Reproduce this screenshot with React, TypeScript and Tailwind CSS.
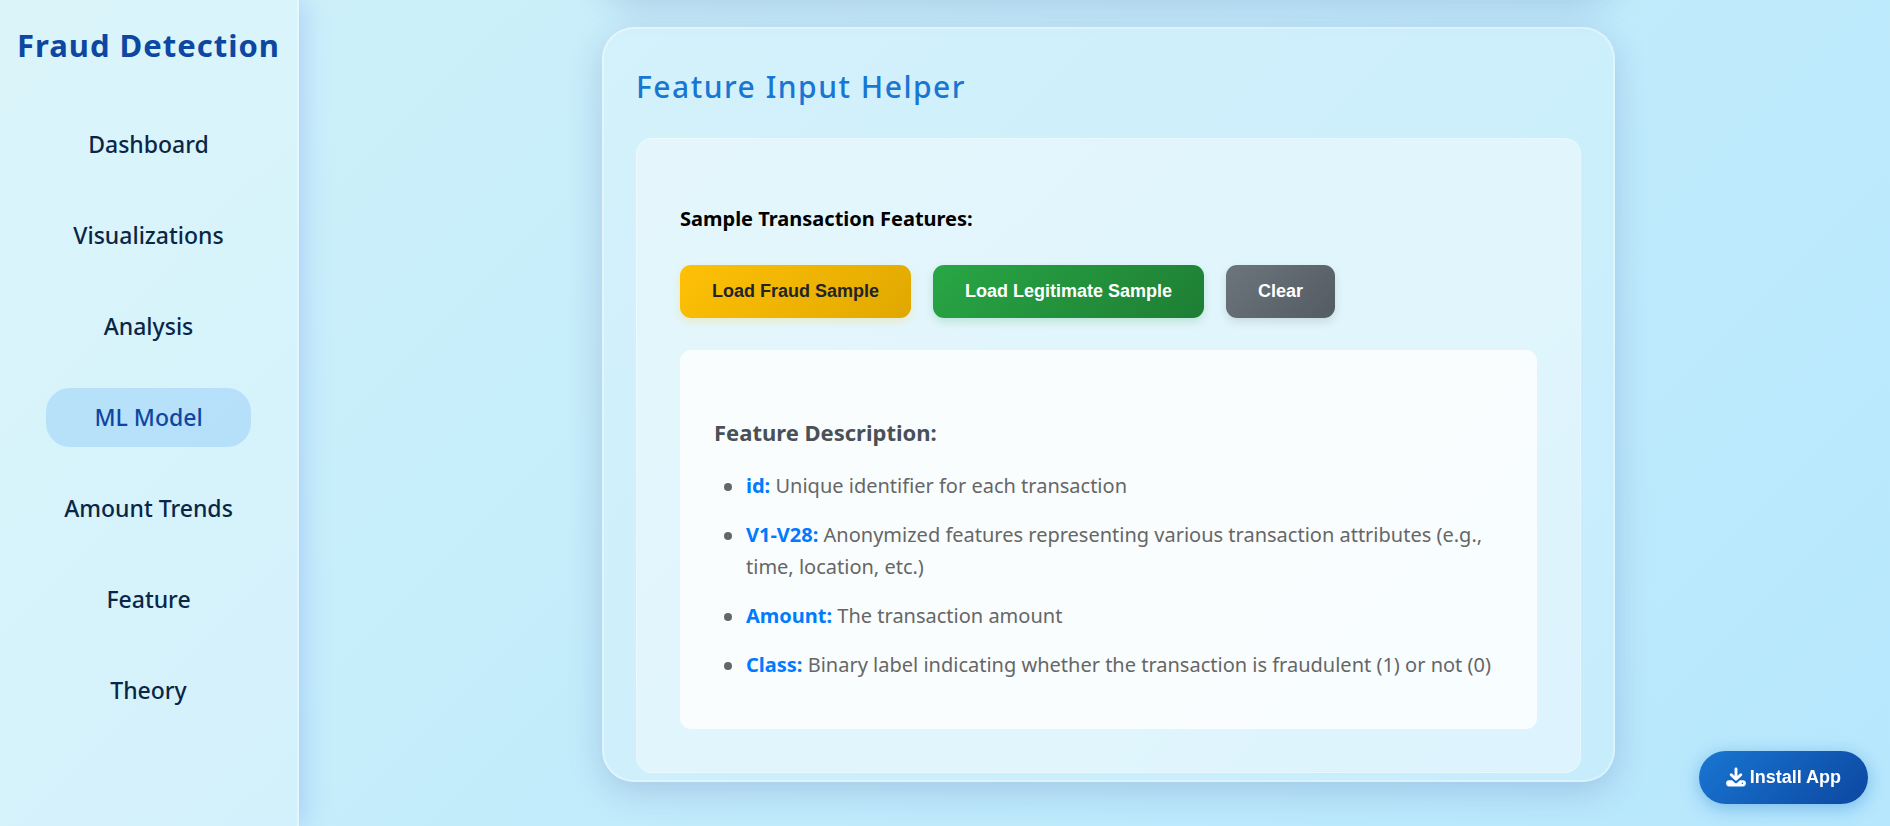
import React from "react";

const navItems = ["Dashboard", "Visualizations", "Analysis", "ML Model", "Amount Trends", "Feature", "Theory"];

const features = [
  { name: "id:", text: "Unique identifier for each transaction" },
  { name: "V1-V28:", text: "Anonymized features representing various transaction attributes (e.g., time, location, etc.)" },
  { name: "Amount:", text: "The transaction amount" },
  { name: "Class:", text: "Binary label indicating whether the transaction is fraudulent (1) or not (0)" },
];

const sampleButton =
  "h-[53px] cursor-pointer rounded-[11px] px-8 pb-0.5 font-['Liberation_Sans',sans-serif] text-lg font-bold";

function Sidebar() {
  const [active, setActive] = React.useState("ML Model");
  return (
    <aside className="z-10 flex w-[299px] shrink-0 flex-col items-center border-r-2 border-white/35 bg-white/25 shadow-[2px_0_26px_rgba(80,120,245,0.3)]">
      <h1 className="mt-[23px] text-[31px] leading-[44px] font-bold tracking-[1px] whitespace-nowrap text-[#0d47a1]">
        Fraud Detection
      </h1>
      <nav className="mt-12 w-full">
        <ul className="flex flex-col items-center gap-8">
          {navItems.map((item) => (
            <li key={item}>
              <a
                href="#"
                aria-current={item === active ? "page" : undefined}
                onClick={(e) => {
                  e.preventDefault();
                  setActive(item);
                }}
                className={
                  item === active
                    ? "block rounded-3xl bg-[#90caf9]/45 px-12 py-3 text-[23px] leading-[35px] font-medium text-[#0d47a1]"
                    : "block rounded-3xl px-12 py-3 text-[23px] leading-[35px] font-medium whitespace-nowrap text-[#0a2647]"
                }
              >
                {item}
              </a>
            </li>
          ))}
        </ul>
      </nav>
    </aside>
  );
}

function DownloadIcon() {
  return (
    <svg viewBox="0 0 20 20" className="size-5" fill="currentColor" aria-hidden="true">
      <path
        d="M10 2v9.500M5.200 7.700l4.800 4.600 4.800-4.600"
        fill="none"
        stroke="currentColor"
        strokeWidth="2.900"
        strokeLinecap="round"
        strokeLinejoin="round"
      />
      <path
        fillRule="evenodd"
        d="M3.200 13.200h2.900L8.800 15.700a1.700 1.700 0 0 0 2.400 0L13.900 13.200h2.900a3.100 3.100 0 0 1 0 6.200H3.200a3.100 3.100 0 0 1 0-6.200Zm13.200 2.400a.75.75 0 1 0 0 1.500.75.75 0 0 0 0-1.500Z"
      />
    </svg>
  );
}

export default function App() {
  return (
    <div className="flex min-h-screen overflow-hidden bg-linear-135 from-[#cff1f9] to-[#b6e7fd] font-['Noto_Sans','Open_Sans',sans-serif]">
      <Sidebar />
      <main className="flex-1 pl-7">
        <div className="mx-auto -mt-24 h-[91px] max-w-[1013px] rounded-[32px] shadow-[0_9px_35px_rgba(31,38,135,0.18)]" />
        <section className="mx-auto mt-8 max-w-[1013px] rounded-[32px] border-2 border-white/35 bg-white/20 px-8 pt-9 pb-[7px] shadow-[0_9px_35px_rgba(31,38,135,0.18)]">
          <h2 className="text-3xl leading-[44px] font-medium tracking-wider text-[#1976d2]">Feature Input Helper</h2>
          <div className="mt-[29px] rounded-2xl border border-white/30 bg-white/40 px-[43px] pt-16 pb-[43px]">
            <h3 className="text-xl leading-8 font-bold text-black">Sample Transaction Features:</h3>
            <div className="mt-[30px] flex flex-wrap gap-[22px]">
              <button type="button" className={`${sampleButton} bg-linear-135 from-[#ffc107] to-[#e0a800] text-[#212529] shadow-[0_4px_9px_rgba(255,193,7,0.2)]`}>
                Load Fraud Sample
              </button>
              <button type="button" className={`${sampleButton} bg-linear-135 from-[#28a745] to-[#1e7e34] text-white shadow-[0_4px_9px_rgba(40,167,69,0.2)]`}>
                Load Legitimate Sample
              </button>
              <button type="button" className={`${sampleButton} bg-linear-135 from-[#6c757d] to-[#545b62] text-white shadow-[0_4px_9px_rgba(108,117,125,0.2)]`}>
                Clear
              </button>
            </div>
            <div className="mt-8 rounded-[11px] bg-white/80 px-[34px] pt-16 pb-12">
              <h4 className="text-[22px] leading-9 font-bold text-[#495057]">Feature Description:</h4>
              <ul className="mt-5 flex flex-col gap-[17px] pl-2.5 text-xl leading-8 text-[#666666]">
                {features.map((f) => (
                  <li
                    key={f.name}
                    className="flex gap-3.5 before:mt-[13px] before:size-2 before:shrink-0 before:rounded-full before:bg-[#666666] before:content-['']"
                  >
                    <p>
                      <strong className="font-bold text-[#007bff]">{f.name}</strong> {f.text}
                    </p>
                  </li>
                ))}
              </ul>
            </div>
          </div>
        </section>
      </main>
      <button
        type="button"
        className="fixed right-[22px] bottom-[22px] z-20 flex h-[53px] cursor-pointer items-center gap-1 rounded-full bg-linear-135 from-[#1976d2] to-[#0d47a1] px-[27px] pb-0.5 font-['Liberation_Sans',sans-serif] text-lg font-bold text-white shadow-[0_4px_18px_rgba(25,118,210,0.4)]"
      >
        <DownloadIcon />
        Install App
      </button>
    </div>
  );
}
